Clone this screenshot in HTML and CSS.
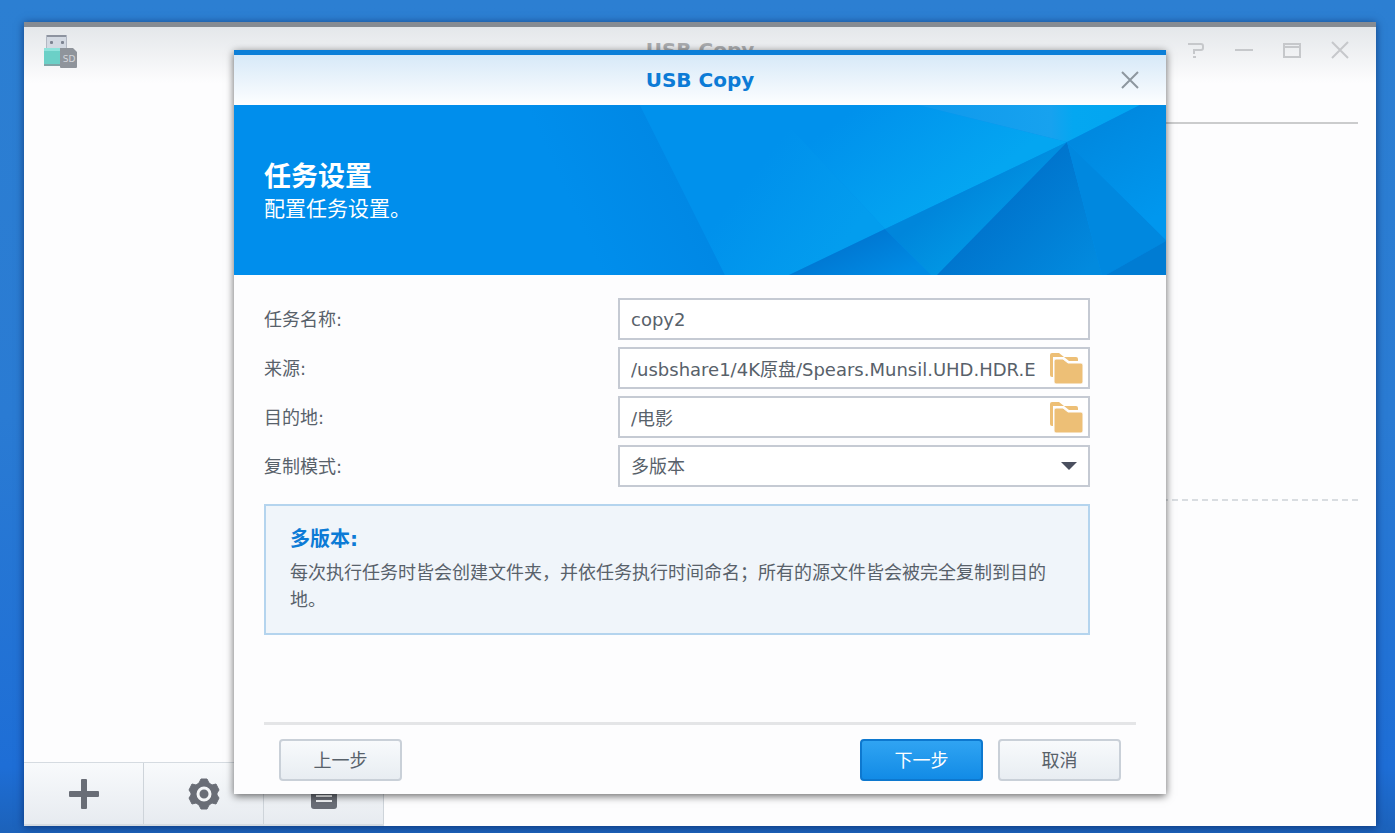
FILE: index.html
```html
<!DOCTYPE html>
<html lang="zh-CN">
<head>
    <meta charset="UTF-8">
    <meta name="viewport" content="width=device-width, initial-scale=1.0">
    <title>USB Copy</title>
    <link rel="stylesheet" href="styles.css">
</head>
<body>
    <div class="window">
        <header class="window-header">
            <svg class="app-icon" width="36" height="34" viewBox="0 0 36 34">
                <rect x="3" y="1" width="21" height="15" fill="#d3d9e2"/>
                <rect x="3" y="1" width="21" height="2" fill="#8d939f"/>
                <rect x="3" y="1" width="1" height="15" fill="#b2b8c3"/>
                <rect x="23" y="1" width="1" height="15" fill="#b2b8c3"/>
                <rect x="7" y="7" width="3" height="3" rx="1" fill="#7d8391"/>
                <rect x="18" y="7" width="3" height="3" rx="1" fill="#7d8391"/>
                <rect x="1" y="14" width="26" height="18" rx="1" fill="#6bd0c7"/>
                <rect x="1" y="14" width="26" height="3" fill="#8fe3dc"/>
                <rect x="1" y="30" width="26" height="2" fill="#7fa5a7"/>
                <path d="M17 14h13l4 4v15q0 1-1 1H18q-1 0-1-1z" fill="#8f949b"/>
                <text class="sd-text" x="26" y="28" text-anchor="middle">SD</text>
            </svg>
            <h1 class="window-title">USB Copy</h1>
            <div class="window-tools">
                <button type="button" class="tool" aria-label="Help">
                    <svg width="20" height="20" viewBox="0 0 20 20"><path d="M2 3h13q2 0 2 2v2q0 2-2 2H8v4M7 16h3" /></svg>
                </button>
                <button type="button" class="tool" aria-label="Minimize">
                    <svg width="20" height="20" viewBox="0 0 20 20"><path d="M1 9h18" /></svg>
                </button>
                <button type="button" class="tool" aria-label="Maximize">
                    <svg width="20" height="20" viewBox="0 0 20 20"><path d="M2 3h16v13H2zM2 6h16" /></svg>
                </button>
                <button type="button" class="tool" aria-label="Close">
                    <svg width="20" height="20" viewBox="0 0 20 20"><path d="M2 1l16 16M18 1L2 17" /></svg>
                </button>
            </div>
        </header>

        <div class="window-body">
            <aside class="sidebar">
                <div class="toolbar">
                    <button type="button" aria-label="Add">
                        <svg width="32" height="32" viewBox="0 0 32 32"><path d="M13 2q0-1 1-1h4q1 0 1 1v11h11q1 0 1 1v4q0 1-1 1H19v11q0 1-1 1h-4q-1 0-1-1V19H2q-1 0-1-1v-4q0-1 1-1h11z" fill="#696d76"/></svg>
                    </button>
                    <button type="button" aria-label="Settings">
                        <svg width="32" height="32" viewBox="0 0 32 32">
                            <path d="M13 1h6l2 4 3 2 4-1 3 6-2 3v2l2 3-3 6-4-1-3 2-2 4h-6l-2-4-3-2-4 1-3-6 2-3v-2l-2-3 3-6 4 1 3-2z" fill="#696d76" stroke="#696d76" stroke-linejoin="round"/>
                            <circle cx="16" cy="16" r="6" fill="none" stroke="#f4f6f8" stroke-width="3"/>
                        </svg>
                    </button>
                    <button type="button" aria-label="Log">
                        <svg width="32" height="32" viewBox="0 0 32 32">
                            <rect x="3" y="1" width="26" height="30" rx="3" fill="#696d76"/>
                            <path d="M8 8h16M8 13h16M8 18h16M8 23h16" stroke="#f4f6f8" stroke-width="2"/>
                        </svg>
                    </button>
                </div>
            </aside>
            <main class="content">
                <div class="content-top"></div>
                <div class="content-bottom"></div>
            </main>
        </div>

        <!-- Task wizard -->
        <div class="dialog" role="dialog" aria-labelledby="dialog-title">
            <div class="dialog-header">
                <h2 class="dialog-title" id="dialog-title">USB Copy</h2>
                <button type="button" class="dialog-close" aria-label="Close">
                    <svg width="20" height="20" viewBox="0 0 20 20"><path d="M2 2l16 16M18 2L2 18" /></svg>
                </button>
            </div>

            <div class="banner">
                <svg class="banner-art" viewBox="0 0 932 170" preserveAspectRatio="xMaxYMid slice">
                    <defs>
                        <linearGradient id="left" gradientUnits="userSpaceOnUse" x1="350" y1="130" x2="450" y2="85">
                            <stop offset="0" stop-color="#008eec"/>
                            <stop offset="1" stop-color="#0088e5"/>
                        </linearGradient>
                        <linearGradient id="light" gradientUnits="userSpaceOnUse" x1="600" y1="0" x2="690" y2="120">
                            <stop offset="0.1" stop-color="#0091ec"/>
                            <stop offset="1" stop-color="#04a6f1"/>
                        </linearGradient>
                        <linearGradient id="slope" gradientUnits="userSpaceOnUse" x1="510" y1="80" x2="600" y2="150">
                            <stop offset="0" stop-color="#0091ec"/>
                            <stop offset="1" stop-color="#039dee"/>
                        </linearGradient>
                        <linearGradient id="top" x1="0" y1="0" x2="1" y2="0">
                            <stop offset="0" stop-color="#0f99ec"/>
                            <stop offset="0.6" stop-color="#17a2ef"/>
                            <stop offset="0.7" stop-color="#04a7f1"/>
                            <stop offset="1" stop-color="#02a5f1"/>
                        </linearGradient>
                        <linearGradient id="dark" gradientUnits="userSpaceOnUse" x1="770" y1="90" x2="850" y2="170">
                            <stop offset="0" stop-color="#0074cd"/>
                            <stop offset="1" stop-color="#028ade"/>
                        </linearGradient>
                        <linearGradient id="foot" gradientUnits="userSpaceOnUse" x1="600" y1="145" x2="620" y2="190">
                            <stop offset="0" stop-color="#0078d3"/>
                            <stop offset="1" stop-color="#008be4"/>
                        </linearGradient>
                        <linearGradient id="fold" gradientUnits="userSpaceOnUse" x1="730" y1="80" x2="765" y2="125">
                            <stop offset="0" stop-color="#0086db"/>
                            <stop offset="1" stop-color="#0196e4"/>
                        </linearGradient>
                        <linearGradient id="right" gradientUnits="userSpaceOnUse" x1="870" y1="20" x2="925" y2="110">
                            <stop offset="0" stop-color="#0089e0"/>
                            <stop offset="1" stop-color="#0097ee"/>
                        </linearGradient>
                    </defs>
                    <rect width="932" height="170" fill="#0090ec"/>
                    <path d="M0 0h406l85 170H0z" fill="url(#left)"/>
                    <path d="M535 0h149l149 37-182 87z" fill="url(#light)"/>
                    <path d="M406 0h129l116 124-96 46h-64z" fill="url(#slope)"/>
                    <path d="M684 0h222l-73 37z" fill="url(#top)"/>
                    <path d="M833 37L651 124l46 46h6z" fill="url(#fold)"/>
                    <path d="M651 124l46 46H555z" fill="url(#foot)"/>
                    <path d="M833 37L703 170h165z" fill="url(#dark)"/>
                    <path d="M833 37l99 98v1l-60 34h-4z" fill="#0088df"/>
                    <path d="M833 37l73-37h26v135z" fill="url(#right)"/>
                    <path d="M932 136v34h-60z" fill="#007cd3"/>
                </svg>
                <div class="banner-text">
                    <h3>任务设置</h3>
                    <p>配置任务设置。</p>
                </div>
            </div>

            <form class="task-form">
                <div class="fields">
                    <label for="task-name">任务名称:</label>
                    <div class="field">
                        <input type="text" id="task-name" name="name" value="copy2">
                    </div>

                    <label for="task-source">来源:</label>
                    <div class="field">
                        <input type="text" id="task-source" name="source" value="/usbshare1/4K原盘/Spears.Munsil.UHD.HDR.E">
                        <button type="button" class="folder" aria-label="Browse source">
                            <svg width="34" height="32" viewBox="0 0 34 32" fill="#edbf76">
                                <path d="M2 1h7l5 4h12q2 0 2 2v2h-9l-5-4H3v20H2q-2 0-2-2V3q0-2 2-2z"/>
                                <path d="M4 9q0-2 2-2h7l5 4h13q2 0 2 2v17q0 2-2 2H6q-2 0-2-2z" stroke="#fdfdfe"/>
                            </svg>
                        </button>
                    </div>

                    <label for="task-target">目的地:</label>
                    <div class="field">
                        <input type="text" id="task-target" name="target" value="/电影">
                        <button type="button" class="folder" aria-label="Browse destination">
                            <svg width="34" height="32" viewBox="0 0 34 32" fill="#edbf76">
                                <path d="M2 1h7l5 4h12q2 0 2 2v2h-9l-5-4H3v20H2q-2 0-2-2V3q0-2 2-2z"/>
                                <path d="M4 9q0-2 2-2h7l5 4h13q2 0 2 2v17q0 2-2 2H6q-2 0-2-2z" stroke="#fdfdfe"/>
                            </svg>
                        </button>
                    </div>

                    <label for="task-mode">复制模式:</label>
                    <div class="field select-field">
                        <select id="task-mode" name="mode">
                            <option>多版本</option>
                        </select>
                    </div>
                </div>

                <div class="info">
                    <h4>多版本:</h4>
                    <p>每次执行任务时皆会创建文件夹，并依任务执行时间命名；所有的源文件皆会被完全复制到目的地。</p>
                </div>

                <div class="dialog-footer">
                    <button type="button" class="btn btn-back">上一步</button>
                    <button type="submit" class="btn btn-primary">下一步</button>
                    <button type="button" class="btn">取消</button>
                </div>
            </form>
        </div>
    </div>
</body>
</html>
```
FILE: styles.css
```css
* {
    box-sizing: border-box;
}

body {
    display: flex;
    min-height: 100vh;
    margin: 0;
    padding: 22px 19px 7px 24px;
    background: linear-gradient(#2c7fd2, #2a7bd3 50%, #1e6ed6 92%, #1c62ba);
    color: #58616a;
    font-family: "DejaVu Sans", "Noto Sans CJK SC", sans-serif;
    font-size: 18px;
    line-height: 27px;
}

h1, h2, h3, h4, p {
    margin: 0;
}

button, input, select {
    padding: 0;
    border: none;
    background: none;
    color: inherit;
    font: inherit;
}

button {
    cursor: pointer;
}

.window {
    position: relative;
    display: flex;
    flex: 1;
    flex-direction: column;
    border-top: 5px solid #868b92;
    background: linear-gradient(#e4e7ea, #fdfdfe 56px);
    box-shadow: 0 1px 8px rgba(0, 20, 70, 0.6);
}

.window-header {
    display: grid;
    grid-template-columns: 1fr auto 1fr;
    align-items: center;
    height: 47px;
    padding: 0 26px 0 19px;
}

.sd-text {
    fill: #d4d7db;
    font-size: 9px;
}

.window-title {
    padding-left: 7px;
    color: #a9abae;
    font-size: 20px;
}

.window-tools {
    display: flex;
    justify-content: flex-end;
    gap: 28px;
}

.tool,
.dialog-close {
    display: flex;
}

.tool path,
.dialog-close path {
    fill: none;
    stroke: #c6c8cb;
    stroke-width: 2;
}

.window-body {
    display: flex;
    flex: 1;
}

.sidebar {
    display: flex;
    flex-direction: column;
    justify-content: flex-end;
    width: 360px;
}

.toolbar {
    display: grid;
    grid-template-columns: repeat(3, 1fr);
    height: 64px;
    border-top: 1px solid #d5dbe1;
    border-bottom: 2px solid #d5dbe1;
    background: linear-gradient(#f8fafc, #e7ebf0);
}

.toolbar button {
    display: flex;
    align-items: center;
    justify-content: center;
    border-right: 1px solid #ced4da;
}

.content {
    display: flex;
    flex: 1;
    flex-direction: column;
    padding: 0 18px;
}

.content-top {
    height: 50px;
    border-bottom: 2px solid #cbcccd;
}

.content-bottom {
    height: 377px;
    border-bottom: 2px dashed #d9dde1;
}

/* dialog */
.dialog {
    position: absolute;
    top: 23px;
    bottom: 32px;
    left: 0;
    right: 0;
    display: flex;
    flex-direction: column;
    width: 932px;
    max-width: 100%;
    margin: 0 auto;
    border-top: 5px solid #0c7fd8;
    background: #fdfdfe;
    box-shadow: 0 2px 8px rgba(0, 0, 0, 0.6);
}

.dialog-header {
    display: grid;
    grid-template-columns: 1fr auto 1fr;
    align-items: center;
    height: 50px;
    padding: 0 26px;
    background: linear-gradient(#d7e9f8, #fdfeff);
}

.dialog-title {
    grid-column: 2;
    color: #0c7bd6;
    font-size: 20px;
}

.dialog-close {
    justify-self: end;
}

.dialog-close path {
    stroke: #8d979f;
}

.banner {
    position: relative;
    height: 170px;
    background: #008eec;
}

.banner-art {
    display: block;
    width: 100%;
    height: 100%;
}

.banner-text {
    position: absolute;
    top: 54px;
    left: 30px;
    color: #fff;
}

.banner-text h3 {
    font-size: 27px;
    line-height: 36px;
}

.banner-text p {
    font-size: 21px;
    line-height: 28px;
}

.task-form {
    display: flex;
    flex: 1;
    flex-direction: column;
    padding: 23px 30px 13px;
}

.fields {
    display: grid;
    grid-template-columns: 3fr 4fr;
    gap: 7px 0;
    align-items: center;
    margin-right: 46px;
}

.field {
    display: flex;
    align-items: center;
    height: 42px;
    padding: 0 4px 0 11px;
    border: 2px solid #c5cad3;
    background: #fff;
}

.field input,
.field select {
    flex: 1;
    min-width: 0;
    height: 100%;
    outline: none;
}

.field select {
    appearance: none;
}

.folder {
    display: flex;
    margin-left: 7px;
}

.select-field {
    padding-right: 11px;
}

.select-field::after {
    border: 8px solid transparent;
    border-top-color: #4a4f5e;
    border-bottom-width: 0;
    content: "";
}

.info {
    margin: 17px 46px 0 0;
    padding: 20px 24px;
    border: 2px solid #b4d4ee;
    background: #f0f5fa;
}

.info h4 {
    margin-bottom: 6px;
    color: #0c7bd6;
    font-size: 20px;
}

.dialog-footer {
    display: flex;
    gap: 15px;
    margin-top: auto;
    padding: 14px 15px 0;
    border-top: 3px solid #e4e5e7;
}

.btn {
    width: 123px;
    height: 42px;
    border: 2px solid #c9d0d8;
    border-radius: 4px;
    background: linear-gradient(#f8fafc, #e8edf2);
}

.btn-back {
    margin-right: auto;
}

.btn-primary {
    border-color: #0d78cf;
    background: linear-gradient(#30a4f2, #128be6);
    color: #fff;
}
```
